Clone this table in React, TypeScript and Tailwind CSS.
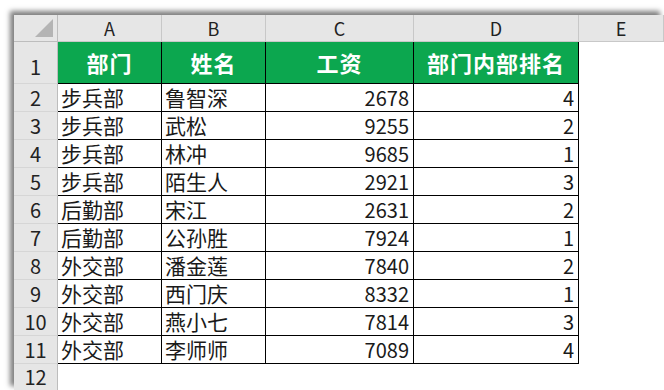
import React from 'react';

type Row = { dept: string; name: string; pay: number; rank: number };

const rows: Row[] = [
  { dept: '步兵部', name: '鲁智深', pay: 2678, rank: 4 },
  { dept: '步兵部', name: '武松', pay: 9255, rank: 2 },
  { dept: '步兵部', name: '林冲', pay: 9685, rank: 1 },
  { dept: '步兵部', name: '陌生人', pay: 2921, rank: 3 },
  { dept: '后勤部', name: '宋江', pay: 2631, rank: 2 },
  { dept: '后勤部', name: '公孙胜', pay: 7924, rank: 1 },
  { dept: '外交部', name: '潘金莲', pay: 7840, rank: 2 },
  { dept: '外交部', name: '西门庆', pay: 8332, rank: 1 },
  { dept: '外交部', name: '燕小七', pay: 7814, rank: 3 },
  { dept: '外交部', name: '李师师', pay: 7089, rank: 4 },
];

const font = { fontFamily: '"Noto Sans CJK SC", "Noto Sans", sans-serif' };

export default function App() {
  return (
    <div className="w-[664px] h-[390px] overflow-hidden bg-white pl-[14px] pt-[15px]" style={font}>
      <div className="h-full shadow-[-4px_-4px_5px_0px_rgba(0,0,0,0.5)] bg-white">
        <div className="grid grid-cols-[44px_104px_104px_148px_165px_1fr] text-[#1a1a1a]">
          {/* column headers */}
          <div className="h-[27px] bg-[#e6e6e6] border-r border-b border-[#bdbdbd] relative">
            <div className="absolute right-[4px] bottom-[4px] w-0 h-0 border-l-[18px] border-l-transparent border-b-[18px] border-b-[#b4b4b4]" />
          </div>
          {['A', 'B', 'C', 'D', 'E'].map((c) => (
            <div
              key={c}
              className="h-[27px] bg-[#e6e6e6] border-r border-b border-[#c8c8c8] flex items-center justify-center text-[18px] text-[#222]"
            >
              {c}
            </div>
          ))}

          {/* row 1 */}
          <div className="h-[42px] bg-[#e6e6e6] border-r border-b border-r-[#bdbdbd] border-b-[#d6d6d6] flex items-end justify-center pb-[1px] text-[20px] text-[#222]">
            1
          </div>
          {['部门', '姓名', '工资', '部门内部排名'].map((h) => (
            <div
              key={h}
              className="h-[42px] bg-[#0ca74f] border-r border-b border-black flex items-center justify-center text-white font-bold text-[22px] tracking-[1px]"
            >
              {h}
            </div>
          ))}
          <div className="h-[42px]" />

          {rows.map((r, i) => (
            <React.Fragment key={i}>
              <div className="h-[28px] bg-[#e6e6e6] border-r border-b border-r-[#bdbdbd] border-b-[#d6d6d6] flex items-center justify-center text-[20px] text-[#222]">
                {i + 2}
              </div>
              <div className="h-[28px] border-r border-b border-black flex items-center pl-[3px] text-[21px]">
                {r.dept}
              </div>
              <div className="h-[28px] border-r border-b border-black flex items-center pl-[3px] text-[21px]">
                {r.name}
              </div>
              <div className="h-[28px] border-r border-b border-black flex items-center justify-end pr-[4px] text-[20px]">
                {r.pay}
              </div>
              <div className="h-[28px] border-r border-b border-black flex items-center justify-end pr-[4px] text-[20px]">
                {r.rank}
              </div>
              <div className="h-[28px]" />
            </React.Fragment>
          ))}

          {/* row 12 */}
          <div className="h-[26px] bg-[#e6e6e6] border-r border-[#bdbdbd] flex items-center justify-center text-[20px] leading-[22px] text-[#222]">
            12
          </div>
          <div className="col-span-5 h-[26px]" />
        </div>
      </div>
    </div>
  );
}
